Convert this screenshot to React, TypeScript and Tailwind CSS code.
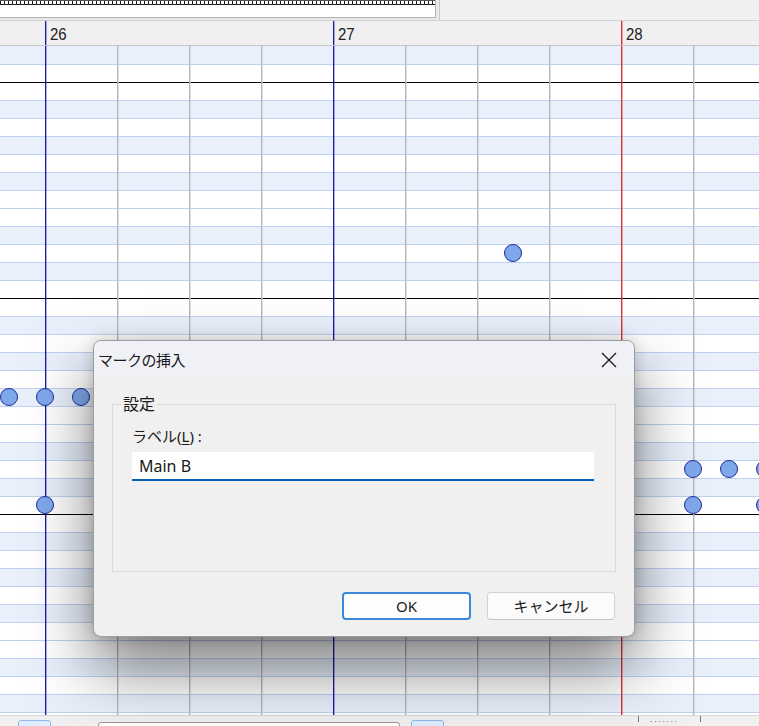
import React from 'react'

// piano roll, one octave from B down to C (true = black key -> blue row)
const OCTAVE = [false, true, false, true, false, true, false, false, true, false, true, false]

type Row = { blue: boolean; bar: boolean; first?: boolean }

const buildRows = (): Row[] => {
  const rows: Row[] = [
    { blue: true, bar: false, first: true },
    { blue: false, bar: true }
  ]
  for (let i = 0; i < 36; i++) {
    const k = i % 12
    rows.push({ blue: OCTAVE[k], bar: k === 11 })
  }
  return rows
}

// notes, center x / center y in page coords (grid starts at y=46)
const notes = [
  { x: 513, y: 253 },
  { x: 9, y: 397 },
  { x: 45, y: 397 },
  { x: 81, y: 397 },
  { x: 45, y: 505 },
  { x: 693, y: 469 },
  { x: 729, y: 469 },
  { x: 765, y: 469 },
  { x: 693, y: 505 },
  { x: 765, y: 505 }
]

const NAVY = 'w-[2px] h-full shrink-0 bg-[linear-gradient(90deg,#1a1aa6_50%,rgba(26,26,166,0.35)_50%)]'
const RED = 'w-[2px] h-full shrink-0 bg-[linear-gradient(90deg,#dc2f2f_50%,rgba(220,47,47,0.4)_50%)]'
const GRAY = 'w-[2px] h-full shrink-0 bg-[linear-gradient(90deg,#b5b5b5_50%,rgba(200,200,200,0.55)_50%)]'

const TopBar = (): React.ReactNode => {
  return (
    <div className="flex h-[21px] bg-[#e9e9e9] border-b border-[#d2d2d2]">
      <div className="w-[436px] h-[18px] bg-white border-r border-b border-[#b3b3b3]">
        <svg width="435" height="5" className="block">
          <defs>
            <pattern id="ticks" width="4" height="5" patternUnits="userSpaceOnUse">
              <rect x="0" y="0" width="1" height="5" fill="#1e1e1e" />
            </pattern>
          </defs>
          <rect x="0" y="0" width="435" height="5" fill="url(#ticks)" />
          <rect x="0" y="0" width="435" height="1" fill="#555" />
          <rect x="0" y="4" width="435" height="1" fill="#1e1e1e" />
        </svg>
      </div>
      <div className="w-[3px]" />
      <div className="flex-1 bg-[#f0f0f0] border-l border-[#c9c9c9]" />
    </div>
  )
}

const Header = (): React.ReactNode => {
  const measures = [
    { n: 26, red: false },
    { n: 27, red: false },
    { n: 28, red: true }
  ]
  return (
    <div className="flex h-[25px] bg-[#f0f0f0] border-b border-[#c4c4c4] overflow-hidden">
      <div className="w-[45px] shrink-0" />
      {measures.map((m) => (
        <div key={m.n} className="flex w-[288px] shrink-0">
          <div className={m.red ? RED : NAVY} />
          <span className="pl-[3px] pt-[3px] font-['Liberation_Sans',sans-serif] text-[15px] leading-[18px] text-[#222] scale-y-[1.1] origin-top">
            {m.n}
          </span>
        </div>
      ))}
    </div>
  )
}

const Grid = (): React.ReactNode => {
  const rows = buildRows()
  return (
    <div className="relative h-[669px] overflow-hidden">
      <div className="flex flex-col">
        {rows.map((r, i) => (
          <div
            key={i}
            className={[
              r.first ? 'h-[19px]' : 'h-[18px]',
              'shrink-0 border-b',
              r.blue ? 'bg-[#e9f0fc]' : 'bg-white',
              r.bar ? 'border-black' : 'border-[#bfd1f0]'
            ].join(' ')}
          />
        ))}
      </div>

      {/* beat / measure lines */}
      <div className="absolute inset-0 flex pointer-events-none">
        <div className="w-[45px] shrink-0" />
        {Array.from({ length: 11 }).map((_, i) => (
          <div key={i} className="flex w-[72px] shrink-0">
            <div className={i === 8 ? RED : i % 4 === 0 ? NAVY : GRAY} />
          </div>
        ))}
      </div>

      {/* notes */}
      {notes.map((n, i) => (
        <div
          key={i}
          className="absolute w-[18px] h-[18px] rounded-full bg-[#7fa8ec] border-[1.5px] border-[#1f2c9c]"
          style={{ left: n.x - 9, top: n.y - 46 - 9 }}
        />
      ))}
    </div>
  )
}

const BottomBar = (): React.ReactNode => {
  return (
    <div className="relative h-[11px] bg-[#f0f0f0] border-t border-[#d8d8d8] overflow-hidden">
      <div className="absolute left-[18px] top-[4px] w-[33px] h-[12px] rounded-[3px] border border-[#8fb8e8] bg-[#dfeeff]" />
      <div className="absolute left-[98px] top-[6px] w-[302px] h-[12px] rounded-[3px] border border-[#9a9a9a] bg-white" />
      <div className="absolute left-[411px] top-[4px] w-[33px] h-[12px] rounded-[3px] border border-[#8fb8e8] bg-[#dfeeff]" />
      <div className="absolute left-[638px] top-[0px] w-px h-[6px] bg-[#777]" />
      <div className="absolute left-[650px] top-[2px] text-[8px] leading-[8px] tracking-[2px] text-[#777]">
        ·······
      </div>
      <div className="absolute left-[700px] top-[0px] w-px h-[6px] bg-[#777]" />
    </div>
  )
}

const Dialog = (): React.ReactNode => {
  return (
    <div className="absolute left-[93px] top-[340px] w-[542px] h-[297px] rounded-[8px] border border-[#9d9d9d] bg-[#f0f0f0] overflow-hidden shadow-[0_32px_64px_rgba(0,0,0,0.5),0_0_14px_rgba(0,0,0,0.18)] font-['Noto_Sans','Noto_Sans_CJK_JP',sans-serif] text-[#1a1a1a]">
      {/* title bar */}
      <div className="flex items-center justify-between h-[37px] bg-[#eff1f6] pl-[4px] pr-[17px]">
        <span className="text-[15px] leading-[20px] tracking-[-0.5px]">マークの挿入</span>
        <svg width="16" height="16" viewBox="0 0 16 16" className="block">
          <path d="M1 1 L15 15 M15 1 L1 15" stroke="#1a1a1a" strokeWidth="1.3" fill="none" />
        </svg>
      </div>

      {/* body */}
      <div className="flex flex-col px-[18px] pt-[26px]">
        <div className="relative h-[168px] border border-[#d9d9d9] pl-[19px] pr-[21px] pt-[21px]">
          <span className="absolute -top-[12px] left-[8px] px-[2px] bg-[#f0f0f0] text-[16px] leading-[22px]">
            設定
          </span>
          <div className="text-[15px] leading-[20px]">
            ラベル(<span className="underline underline-offset-2">L</span>) :
          </div>
          <div className="mt-[6px] flex items-center h-[29px] bg-white border-b-2 border-[#0063b8] pl-[7px] text-[16px]">
            Main B
          </div>
        </div>

        <div className="flex justify-end gap-[16px] mt-[20px] pr-[1px]">
          <button className="w-[129px] h-[28px] rounded-[4px] bg-[#fdfdfd] border-2 border-[#3b87d8] text-[15px] leading-[20px]">
            OK
          </button>
          <button className="w-[128px] h-[28px] rounded-[4px] bg-[#fbfbfb] border border-[#d3d3d3] border-b-[#c2c2c2] text-[15px] leading-[20px]">
            キャンセル
          </button>
        </div>
      </div>
    </div>
  )
}

export default function App(): React.ReactNode {
  return (
    <div className="relative w-[759px] h-[726px] overflow-hidden bg-white">
      <TopBar />
      <Header />
      <Grid />
      <BottomBar />
      <Dialog />
    </div>
  )
}
